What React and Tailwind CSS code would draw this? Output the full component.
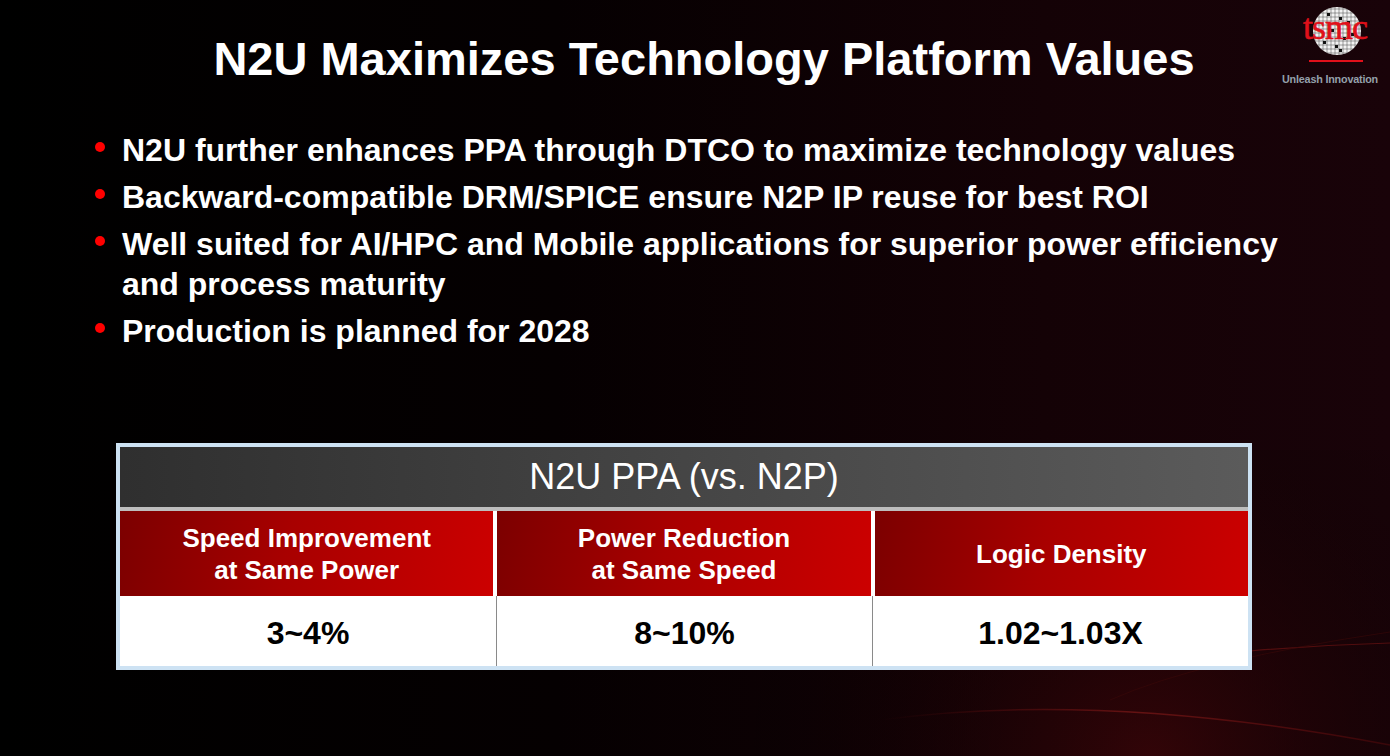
import React from 'react';

const bullets = [
  'N2U further enhances PPA through DTCO to maximize technology values',
  'Backward-compatible DRM/SPICE ensure N2P IP reuse for best ROI',
  'Well suited for AI/HPC and Mobile applications for superior power efficiency and process maturity',
  'Production is planned for 2028',
];

const columns = [
  { head: ['Speed Improvement', 'at Same Power'], value: '3~4%' },
  { head: ['Power Reduction', 'at Same Speed'], value: '8~10%' },
  { head: ['Logic Density'], value: '1.02~1.03X' },
];

function TsmcLogo() {
  // wafer grid behind the red wordmark
  const lines = [];
  for (let i = 0; i < 12; i++) {
    const p = 2 + i * 4;
    lines.push(<line key={'v' + i} x1={p} y1="0" x2={p} y2="48" stroke="#444" strokeWidth="0.5" />);
    lines.push(<line key={'h' + i} x1="0" y1={p} x2="48" y2={p} stroke="#444" strokeWidth="0.5" />);
  }
  const dies = [[14, 6], [26, 10], [34, 14], [10, 34], [22, 38], [30, 30], [38, 26], [18, 22], [26, 42]];
  return (
    <div className="flex flex-col items-center w-[100px]">
      <svg width="100" height="64" viewBox="0 0 100 64">
        <defs>
          <clipPath id="wafer">
            <circle cx="24" cy="24" r="24" />
          </clipPath>
        </defs>
        <g transform="translate(33 7)">
          <circle cx="24" cy="24" r="24" fill="#f2f2f2" />
          <g clipPath="url(#wafer)">
            {lines}
            {dies.map(([x, y], i) => (
              <rect key={i} x={x} y={y} width="3" height="3" fill="#111" />
            ))}
          </g>
        </g>
        <text x="55" y="39" textAnchor="middle" fill="#e0101a" stroke="#e0101a" strokeWidth="0.6" fontFamily="'Liberation Serif', serif" fontSize="36" letterSpacing="-1">tsmc</text>
        <rect x="29" y="60" width="54" height="2" fill="#e0101a" />
      </svg>
      <div className="mt-[10px] text-[10.8px] leading-none text-[#94a0ab] font-bold tracking-[-0.2px] whitespace-nowrap">Unleash Innovation</div>
    </div>
  );
}

export default function App() {
  return (
    <div
      className="relative w-[1390px] h-[756px] overflow-hidden bg-[linear-gradient(90deg,#000_0%,#050001_40%,#140206_75%,#190309_100%)] text-white"
      style={{ fontFamily: "'Liberation Sans', Arial, sans-serif" }}
    >
      {/* swoosh glow bottom right */}
      <svg className="absolute inset-0 pointer-events-none" width="1390" height="756" viewBox="0 0 1390 756">
        <defs>
          <radialGradient id="glow" cx="1150" cy="760" r="420" gradientUnits="userSpaceOnUse">
            <stop offset="0" stopColor="#3a0508" stopOpacity="0.8" />
            <stop offset="1" stopColor="#000" stopOpacity="0" />
          </radialGradient>
          <linearGradient id="arc" x1="0" x2="1" y1="0" y2="0">
            <stop offset="0" stopColor="#5a0a0c" stopOpacity="0" />
            <stop offset="0.5" stopColor="#6b1414" stopOpacity="0.9" />
            <stop offset="1" stopColor="#5a0a0c" stopOpacity="0.5" />
          </linearGradient>
        </defs>
        <rect x="700" y="450" width="690" height="306" fill="url(#glow)" />
        <path d="M880 720 Q1100 690 1390 745" stroke="url(#arc)" strokeWidth="1.5" fill="none" />
        <path d="M1250 651 Q1320 645 1390 643" stroke="#6a1212" strokeOpacity="0.7" strokeWidth="1.2" fill="none" />
        <path d="M1110 700 Q1200 660 1390 632" stroke="#3a0808" strokeOpacity="0.6" strokeWidth="1" fill="none" />
      </svg>

      <div className="absolute top-0 right-[10px]">
        <TsmcLogo />
      </div>

      <div className="relative flex flex-col">
        <h1 className="pt-[34px] pl-[18px] text-center text-[47px] leading-[50px] font-bold">
          N2U Maximizes Technology Platform Values
        </h1>

        <ul className="mt-[46px] pl-[95px] flex flex-col gap-[7px]">
          {bullets.map((b, i) => (
            <li key={i} className="flex items-start text-[32px] leading-[40px] font-bold">
              <span className="w-[27px] shrink-0 flex pt-[12px]">
                <span className="w-[10px] h-[10px] rounded-full bg-[#ff0000]" />
              </span>
              <span className="max-w-[1190px]">{b}</span>
            </li>
          ))}
        </ul>

        <div className="mt-[92px] ml-[116px] w-[1136px] border-[4px] border-[#cde2f3] bg-white">
          <div className="h-[60px] flex items-center justify-center bg-[linear-gradient(90deg,#2f2f2f,#5b5b5b)] text-[36px]">
            N2U PPA (vs. N2P)
          </div>
          <div className="h-[4px] bg-[#bdbdbd]" />
          <div className="grid grid-cols-3 gap-[4px] bg-white">
            {columns.map((c, i) => (
              <div
                key={i}
                className="h-[85px] flex flex-col items-center justify-center bg-[linear-gradient(100deg,#7c0000_0%,#a80000_45%,#cc0000_100%)] text-[26px] leading-[32px] font-bold"
              >
                {c.head.map((h) => (
                  <span key={h}>{h}</span>
                ))}
              </div>
            ))}
          </div>
          <div className="grid grid-cols-3 h-[70px] bg-white text-black">
            {columns.map((c, i) => (
              <div key={i} className={'flex items-center justify-center text-[32px] font-bold pt-[4px] ' + (i > 0 ? 'border-l border-[#8a8a8a]' : '')}>
                {c.value}
              </div>
            ))}
          </div>
        </div>
      </div>
    </div>
  );
}
